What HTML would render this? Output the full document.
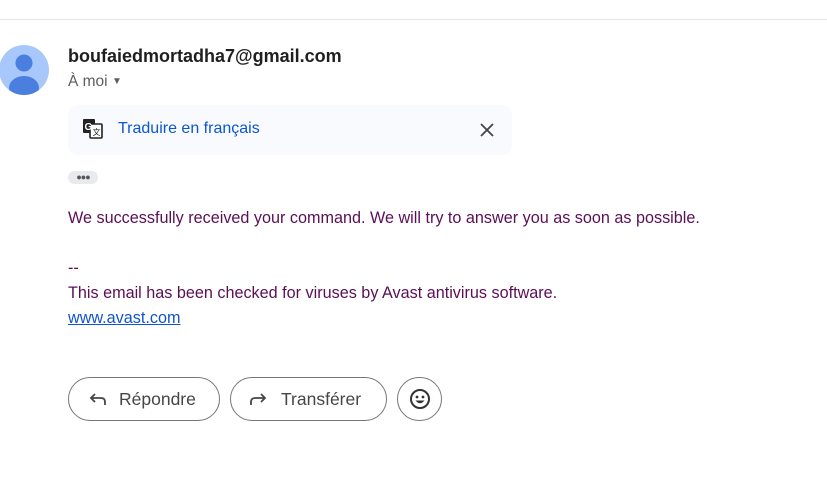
<!DOCTYPE html>
<html><head><meta charset="utf-8"><style>
body{margin:0;width:827px;height:495px;background:#fff;font-family:"Liberation Sans",Arial,sans-serif;position:relative;overflow:hidden}
.a{position:absolute}
.btn{position:absolute;top:377px;height:44px;border:1px solid #747775;border-radius:22px;box-sizing:border-box;font-size:17.5px;color:#444746;display:flex;align-items:center}
.msg{color:#5b0f56;font-size:16.2px}
</style></head><body>
<div class="a" style="left:0;top:19px;width:827px;height:1px;background:#e6e6e6"></div>
<svg class="a" style="left:0;top:45px" width="49" height="50" viewBox="0 0 49 50"><defs><clipPath id="c"><circle cx="24" cy="25" r="25"/></clipPath></defs><circle cx="24" cy="25" r="25" fill="#a8c7fa"/><g clip-path="url(#c)" fill="#4a7fe0"><circle cx="24" cy="18" r="8.5"/><ellipse cx="24" cy="43" rx="15" ry="12"/></g></svg>
<div class="a" style="left:68px;top:46px;font-size:18px;font-weight:bold;color:#1f1f1f">boufaiedmortadha7@gmail.com</div>
<div class="a" style="left:68px;top:73px;font-size:15.5px;color:#5e5e5e">À moi <span style="font-size:10px;position:relative;top:-2px">▼</span></div>
<div class="a" style="left:68px;top:105px;width:444px;height:50px;background:#f8fafd;border-radius:10px"></div>
<svg class="a" style="left:82px;top:118px" width="22" height="22" viewBox="0 0 22 22"><rect x="1" y="1" width="12" height="14" rx="1" fill="#222"/><rect x="8" y="6" width="12" height="14" rx="1" fill="#fff" stroke="#222" stroke-width="1.6"/><text x="2.5" y="12" font-size="10" font-weight="bold" fill="#fff" font-family="Liberation Sans">G</text><text x="10.5" y="17" font-size="8" fill="#222" font-family="Liberation Sans">文</text></svg>
<div class="a" style="left:118px;top:120px;font-size:16px;color:#0b57d0">Traduire en français</div>
<svg class="a" style="left:480px;top:123px" width="14" height="14"><path d="M1 1L13 13M13 1L1 13" stroke="#444" stroke-width="1.8"/></svg>
<div class="a" style="left:68px;top:171px;width:30px;height:13px;background:#e8eaed;border-radius:7px;font-size:9px;color:#555;text-align:center;line-height:12px;letter-spacing:-1px">●●●</div>
<div class="a msg" style="left:68px;top:209px">We successfully received your command. We will try to answer you as soon as possible.</div>
<div class="a msg" style="left:68px;top:259px">--</div>
<div class="a msg" style="left:68px;top:284px">This email has been checked for viruses by Avast antivirus software.</div>
<div class="a" style="left:68px;top:309px;font-size:16.2px;color:#1155cc;text-decoration:underline">www.avast.com</div>
<div class="btn" style="left:68px;width:152px"><svg style="margin-left:20px" width="18" height="14" viewBox="0 0 18 14"><path d="M6 2L2 6L6 10M2 6H12Q16 6 16 10V13" fill="none" stroke="#444746" stroke-width="1.8"/></svg><span style="margin-left:12px">Répondre</span></div>
<div class="btn" style="left:230px;width:157px"><svg style="margin-left:18px" width="18" height="14" viewBox="0 0 18 14"><path d="M12 2L16 6L12 10M16 6H6Q2 6 2 10V13" fill="none" stroke="#444746" stroke-width="1.8"/></svg><span style="margin-left:14px">Transférer</span></div>
<div class="btn" style="left:397px;width:45px;justify-content:center"><svg width="22" height="22" viewBox="0 0 22 22"><circle cx="11" cy="11" r="9" fill="none" stroke="#333" stroke-width="2"/><circle cx="8" cy="9" r="1.4" fill="#333"/><circle cx="14" cy="9" r="1.4" fill="#333"/><path d="M6.5 12.5Q11 18 15.5 12.5Z" fill="#333"/></svg></div>
</body></html>
